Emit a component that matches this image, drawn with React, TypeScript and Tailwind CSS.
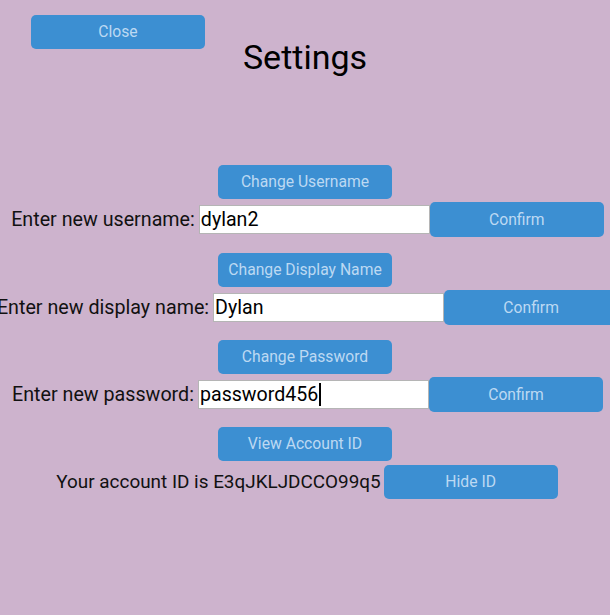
const Btn = ({ label, className = '' }: { label: string; className?: string }) => (
    <button
        className={`w-[174px] shrink-0 rounded-[5px] bg-[#3c8fd2] text-[15.7px] text-[#bcd9f2] ${className}`}
    >
        {label}
    </button>
)

const Row = ({ label, value, caret }: { label: string; value: string; caret?: boolean }) => (
    <div className="flex items-center justify-center pl-[5px]">
        <span className="mr-[4px] whitespace-nowrap text-[19.7px] text-[#111]">{label}</span>
        <div className="flex h-[29px] w-[231px] shrink-0 items-center border border-[#b5b5b5] bg-white pl-[1px] text-[19.6px] text-black">
            {value}
            {caret && <span className="ml-[1px] h-[23px] w-[2px] bg-black" />}
        </div>
        <Btn label="Confirm" className="h-[35px]" />
    </div>
)

export default function App() {
    return (
        <div className="h-[615px] w-[610px] overflow-hidden bg-[#cdb3cd] font-['Roboto',sans-serif]">
            {/* header */}
            <div className="grid grid-cols-[1fr_auto_1fr]">
                <div>
                    <Btn label="Close" className="ml-[31px] mt-[15px] h-[34px]" />
                </div>
                <h1 className="mt-[37px] text-[34px] leading-[40px] text-black">Settings</h1>
                <div />
            </div>

            <div className="mt-[88px] flex flex-col items-center">
                <Btn label="Change Username" className="h-[34px]" />
                <div className="mt-[3px] w-full">
                    <Row label="Enter new username:" value="dylan2" />
                </div>

                <Btn label="Change Display Name" className="mt-[16px] h-[34px]" />
                <div className="mt-[3px] w-full">
                    <Row label="Enter new display name:" value="Dylan" />
                </div>

                <Btn label="Change Password" className="mt-[15px] h-[34px]" />
                <div className="mt-[3px] w-full">
                    <Row label="Enter new password:" value="password456" caret />
                </div>

                <Btn label="View Account ID" className="mt-[15px] h-[34px]" />
                <div className="mt-[4px] flex w-full items-center justify-center pl-[4px]">
                    <span className="mr-[3px] whitespace-nowrap text-[18.9px] text-[#111]">
                        Your account ID is E3qJKLJDCCO99q5
                    </span>
                    <Btn label="Hide ID" className="h-[34px]" />
                </div>
            </div>
        </div>
    )
}
